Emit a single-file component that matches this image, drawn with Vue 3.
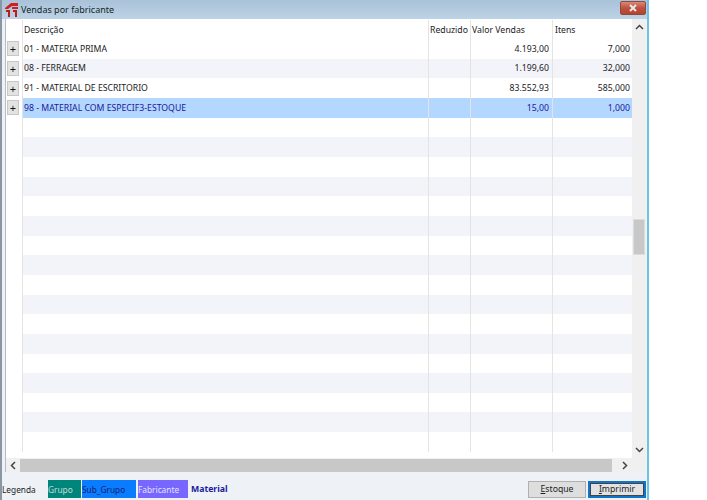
<script setup>
const vendas = [
  { desc: '01 - MATERIA PRIMA', valor: '4.193,00', itens: '7,000' },
  { desc: '08 - FERRAGEM', valor: '1.199,60', itens: '32,000' },
  { desc: '91 - MATERIAL DE ESCRITORIO', valor: '83.552,93', itens: '585,000' },
  { desc: '98 - MATERIAL COM ESPECIF3-ESTOQUE', valor: '15,00', itens: '1,000', selected: true },
]

// linhas vazias até o fim da grade
const linhas = [...vendas]
while (linhas.length < 21) linhas.push({ desc: '', valor: '', itens: '', empty: true })
</script>

<template>
  <div class="janela">
    <div class="titulo">
      <svg class="logo" width="13" height="15" viewBox="0 0 13 15">
        <path d="M0 6 L6 1 L13 1 L13 4 L7 4 L3 7 L0 7 Z" fill="#d01f1f" />
        <path d="M7 5 L13 5 L13 7 L7 7 Z" fill="#d01f1f" />
        <path d="M1 8 H5 V15 H3 V10 H1 Z M8 8 H12 V15 H10 V10 H8 Z" fill="#c01a1a" />
      </svg>
      <span class="titulo-texto">Vendas por fabricante</span>
      <button class="fechar">
        <svg width="10" height="8" viewBox="0 0 10 8">
          <path d="M2 1 L8 7 M8 1 L2 7" stroke="#e8e8e8" stroke-width="2" />
        </svg>
      </button>
    </div>

    <div class="quadro">
      <div class="meio">
        <div class="grade">
          <div class="linha cabecalho">
            <div class="cel ind"></div>
            <div class="cel desc">Descrição</div>
            <div class="cel red">Reduzido</div>
            <div class="cel val">Valor Vendas</div>
            <div class="cel itens">Itens</div>
          </div>
          <div
            v-for="(l, i) in linhas"
            :key="i"
            class="linha"
            :class="{ listrada: i % 2 == 1, selecionada: l.selected }"
          >
            <div class="cel ind">
              <span v-if="!l.empty" class="mais">+</span>
            </div>
            <div class="cel desc">{{ l.desc }}</div>
            <div class="cel red"></div>
            <div class="cel val num">{{ l.valor }}</div>
            <div class="cel itens num">{{ l.itens }}</div>
          </div>
        </div>
        <div class="barra-v">
          <svg width="9" height="6" viewBox="0 0 9 6"><path d="M1 5 L4.5 1.5 L8 5" stroke="#444" stroke-width="1.5" fill="none" /></svg>
          <div class="trilho-v"><div class="polegar-v"></div></div>
          <svg width="9" height="6" viewBox="0 0 9 6"><path d="M1 1 L4.5 4.5 L8 1" stroke="#444" stroke-width="1.5" fill="none" /></svg>
        </div>
      </div>
      <div class="barra-h">
        <svg width="6" height="9" viewBox="0 0 6 9"><path d="M5 1 L1.5 4.5 L5 8" stroke="#444" stroke-width="1.5" fill="none" /></svg>
        <div class="polegar-h"></div>
        <svg width="6" height="9" viewBox="0 0 6 9"><path d="M1 1 L4.5 4.5 L1 8" stroke="#444" stroke-width="1.5" fill="none" /></svg>
      </div>
    </div>

    <div class="rodape">
      <span class="legenda">Legenda</span>
      <span class="tag grupo">Grupo</span>
      <span class="tag sub">Sub_Grupo</span>
      <span class="tag fab">Fabricante</span>
      <span class="material">Material</span>
      <button class="btn estoque"><u>E</u>stoque</button>
      <button class="btn imprimir"><u>I</u>mprimir</button>
    </div>
  </div>
</template>

<style>
html, body {
  background: #fff;
}
</style>

<style scoped>
.janela {
  width: 649px;
  height: 500px;
  box-sizing: border-box;
  display: flex;
  flex-direction: column;
  background: #eef1f6;
  border-left: 2px solid #8a97a3;
  border-right: 2px solid #6cc3e4;
  font-family: "Noto Sans", "Liberation Sans", sans-serif;
  font-size: 8.7px;
  color: #222;
}

.titulo {
  height: 19px;
  display: flex;
  align-items: center;
  padding-left: 3px;
  background: linear-gradient(#a9c2d8, #bdd3e6);
  flex-shrink: 0;
}

.logo {
  margin-right: 3px;
}

.titulo-texto {
  font-size: 9px;
  color: #141f29;
}

.fechar {
  margin-left: auto;
  margin-right: 1px;
  margin-bottom: 3px;
  width: 26px;
  height: 14px;
  padding: 0;
  display: flex;
  align-items: center;
  justify-content: center;
  border: 1px solid #8f4a40;
  border-radius: 2px;
  background: linear-gradient(#d9897a, #c0503f 50%, #b5432f);
}

.quadro {
  margin-left: 3px;
  margin-right: 1px;
  height: 453px;
  flex-shrink: 0;
  display: flex;
  flex-direction: column;
  background: #f0f0f0;
  border-left: 1px solid #b5bcc4;
  box-sizing: border-box;
}

.meio {
  flex: 1;
  display: flex;
  min-height: 0;
}

.grade {
  flex: 1;
  background: #fff;
  overflow: hidden;
}

.linha {
  display: flex;
  height: 19.67px;
}

.cabecalho {
  height: 20px;
  padding-top: 1px;
  box-sizing: border-box;
}

.listrada {
  background: #f3f4fa;
}

.selecionada {
  background: #b3d7ff;
  color: #1a1a9c;
}

.cel {
  box-sizing: border-box;
  flex-shrink: 0;
  border-right: 1px solid #e4e4e4;
  display: flex;
  align-items: center;
  padding: 0 3px 0 1px;
  white-space: nowrap;
}

.ind {
  width: 17px;
  padding: 0 0 0 1px;
  background: #fff;
}

.desc {
  width: 406px;
}

.red {
  width: 42px;
}

.val {
  width: 82px;
}

.itens {
  width: 79px;
  border-right: none;
  padding-left: 2px;
  padding-right: 2px;
}

.num {
  justify-content: flex-end;
}

.mais {
  width: 12px;
  height: 15px;
  box-sizing: border-box;
  display: flex;
  align-items: center;
  justify-content: center;
  background: #e3e3e3;
  border: 1px solid #c8c8c8;
  color: #111;
  font-size: 11px;
}

.barra-v {
  width: 14px;
  padding: 5px 0 5px;
  box-sizing: border-box;
  display: flex;
  flex-direction: column;
  align-items: center;
  background: #f0f0f0;
}

.trilho-v {
  flex: 1;
  width: 100%;
  padding: 189px 1px 0 1px;
  box-sizing: border-box;
}

.polegar-v {
  height: 36px;
  background: #c8c8c8;
  border: 1px solid #dcdcdc;
  box-sizing: border-box;
}

.barra-h {
  height: 14px;
  flex-shrink: 0;
  display: flex;
  align-items: center;
  padding: 0 18px 0 4px;
  gap: 4px;
  background: #f0f0f0;
}

.polegar-h {
  flex: 1;
  height: 13px;
  background: #c8c8c8;
  margin-right: 6px;
}

.rodape {
  flex: 1;
  display: flex;
  align-items: center;
  padding: 6px 0 0;
  background: #eef1f6;
}

.legenda {
  width: 46px;
  font-size: 8.3px;
}

.tag {
  height: 18px;
  display: flex;
  align-items: center;
  font-size: 8.3px;
}

.grupo {
  width: 33px;
  margin-right: 1px;
  background: #00857a;
  color: #c8d8d6;
}

.sub {
  width: 54px;
  margin-right: 2px;
  background: #0a7cff;
  color: #10206a;
}

.fab {
  width: 50px;
  background: #7766ff;
  color: #e6e3ff;
}

.material {
  margin-left: 3px;
  font-weight: 700;
  color: #1c1c9c;
}

.btn {
  height: 17px;
  width: 58px;
  padding: 0;
  font-family: inherit;
  font-size: 8.7px;
  color: #222;
  background: #dedede;
  border: 1px solid #b0b0b0;
}

.estoque {
  margin-left: auto;
  margin-right: 2px;
}

.imprimir {
  margin-right: 1px;
  background: #e2e2e2;
  border: 2px solid #1174c9;
  outline: 1px solid #444;
  outline-offset: -3px;
}
</style>
